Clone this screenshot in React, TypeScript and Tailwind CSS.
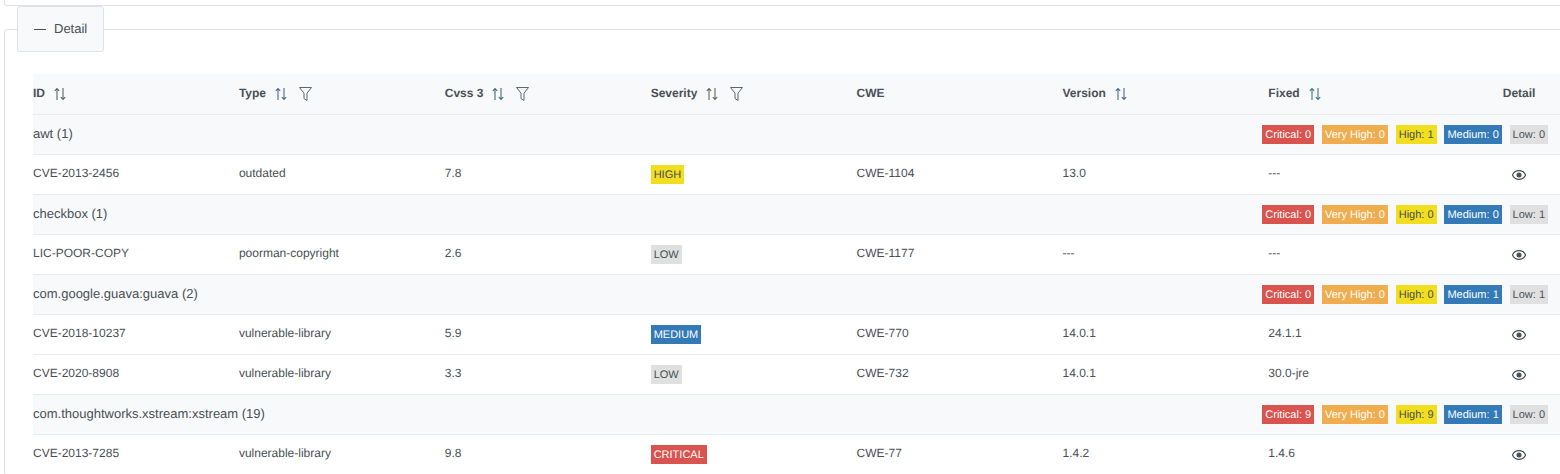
const font = "font-['Liberation_Sans',Arial,sans-serif]";

type Counts = [number, number, number, number, number];

type Row =
  | { group: string; counts: Counts }
  | { id: string; type: string; cvss: string; severity: string; cwe: string; version: string; fixed: string };

const rows: Row[] = [
  { group: "awt (1)", counts: [0, 0, 1, 0, 0] },
  { id: "CVE-2013-2456", type: "outdated", cvss: "7.8", severity: "HIGH", cwe: "CWE-1104", version: "13.0", fixed: "---" },
  { group: "checkbox (1)", counts: [0, 0, 0, 0, 1] },
  { id: "LIC-POOR-COPY", type: "poorman-copyright", cvss: "2.6", severity: "LOW", cwe: "CWE-1177", version: "---", fixed: "---" },
  { group: "com.google.guava:guava (2)", counts: [0, 0, 0, 1, 1] },
  { id: "CVE-2018-10237", type: "vulnerable-library", cvss: "5.9", severity: "MEDIUM", cwe: "CWE-770", version: "14.0.1", fixed: "24.1.1" },
  { id: "CVE-2020-8908", type: "vulnerable-library", cvss: "3.3", severity: "LOW", cwe: "CWE-732", version: "14.0.1", fixed: "30.0-jre" },
  { group: "com.thoughtworks.xstream:xstream (19)", counts: [9, 0, 9, 1, 0] },
  { id: "CVE-2013-7285", type: "vulnerable-library", cvss: "9.8", severity: "CRITICAL", cwe: "CWE-77", version: "1.4.2", fixed: "1.4.6" },
];

const severityClass: Record<string, string> = {
  CRITICAL: "bg-[#d9534f] text-white",
  "VERY HIGH": "bg-[#f0ad4e] text-white",
  HIGH: "bg-[#f1de1f] text-[#495057]",
  MEDIUM: "bg-[#337ab7] text-white",
  LOW: "bg-[#e0e0e0] text-[#495057]",
};

const labels = ["Critical", "Very High", "High", "Medium", "Low"];
const labelKeys = ["CRITICAL", "VERY HIGH", "HIGH", "MEDIUM", "LOW"];

function SortIcon({ color }: { color: string }) {
  return (
    <svg width="12" height="14" viewBox="0 0 12 14" fill="none" stroke={color} strokeWidth="1.1" className="shrink-0">
      <path d="M3 13V1.5M0.8 3.8L3 1.5L5.2 3.8" />
      <path d="M9 1V12.5M6.8 10.2L9 12.5L11.2 10.2" />
    </svg>
  );
}

function FilterIcon() {
  return (
    <svg width="13" height="14" viewBox="0 0 13 14" fill="none" stroke="#5a6670" strokeWidth="1" className="shrink-0">
      <path d="M0.5 0.5H12.5L8 6.2V13.5L5 11.5V6.2Z" />
    </svg>
  );
}

function EyeIcon() {
  return (
    <svg width="14" height="10" viewBox="0 0 14 10" className="inline-block">
      <path d="M7 0.6C4 0.6 1.6 2.3 0.4 5C1.6 7.7 4 9.4 7 9.4S12.4 7.7 13.6 5C12.4 2.3 10 0.6 7 0.6Z" fill="none" stroke="#495057" strokeWidth="1.2" />
      <circle cx="7" cy="5" r="2.5" fill="#495057" />
    </svg>
  );
}

function Badge({ kind, children }: { kind: string; children: React.ReactNode }) {
  return <span className={`flex h-[19px] w-fit items-center px-[3px] pt-[2px] text-[11px] leading-none ${severityClass[kind]}`}>{children}</span>;
}

function Head({ label, sort, filter }: { label: string; sort?: string; filter?: boolean }) {
  return (
    <th className="p-0 text-left align-middle font-bold">
      <div className="flex items-center">
        <span className="relative top-[-1px]">{label}</span>
        {sort && <span className="ml-[9px]"><SortIcon color={sort} /></span>}
        {filter && <span className="ml-3"><FilterIcon /></span>}
      </div>
    </th>
  );
}

export default function App() {
  return (
    <div className={`h-screen w-screen overflow-hidden bg-white text-xs text-[#495057] [text-rendering:geometricPrecision] ${font}`}>
      <div className="ml-1 h-[6px] w-[1600px] rounded-b-[3px] border border-t-0 border-[#dee2e6]" />
      <fieldset className="ml-1 w-[1600px] rounded-[3px] border border-[#dee2e6] pl-7 pr-[39px] pt-[22px]">
        <legend className="ml-[-16px] flex h-[46px] w-[87px] items-center rounded-[3px] border border-[#dee2e6] bg-[#f8f9fa] pl-4 text-[13px]">
          <span className="mr-[8px] h-px w-[12px] bg-[#495057]" />
          Detail
        </legend>
        <table className="w-[1527px] table-fixed border-collapse">
          <colgroup>
            <col className="w-[205.9px]" />
            <col className="w-[205.9px]" />
            <col className="w-[205.9px]" />
            <col className="w-[205.9px]" />
            <col className="w-[205.9px]" />
            <col className="w-[205.9px]" />
            <col className="w-[205.9px]" />
            <col />
          </colgroup>
          <thead>
            <tr className="h-10 border-b border-[#e9ecef] bg-[#f8f9fa]">
              <Head label="ID" sort="#566a62" />
              <Head label="Type" sort="#4a6a90" filter />
              <Head label="Cvss 3" sort="#3f7080" filter />
              <Head label="Severity" sort="#66695a" filter />
              <Head label="CWE" />
              <Head label="Version" sort="#4a6a90" />
              <Head label="Fixed" sort="#3f7a88" />
              <th className="p-0 pl-[4px] text-center align-middle font-bold">
                <span className="relative top-[-1px]">Detail</span>
              </th>
            </tr>
          </thead>
          <tbody>
            {rows.map((row) =>
              "group" in row ? (
                <tr key={row.group} className="h-10 border-b border-[#e9ecef] bg-[#f8f9fa]">
                  <td colSpan={8} className="p-0">
                    <div className="flex items-center justify-between pr-3">
                      <span className="text-[13px]">{row.group}</span>
                      <div className="flex items-center gap-[7.8px]">
                        {row.counts.map((n, i) => (
                          <Badge key={labels[i]} kind={labelKeys[i]}>
                            {labels[i]}: {n}
                          </Badge>
                        ))}
                      </div>
                    </div>
                  </td>
                </tr>
              ) : (
                <tr key={row.id} className="h-10 border-b border-[#e9ecef]">
                  <td className="p-0 pb-[2px]">{row.id}</td>
                  <td className="p-0 pb-[2px]">{row.type}</td>
                  <td className="p-0 pb-[2px]">{row.cvss}</td>
                  <td className="p-0 pt-px">
                    <Badge kind={row.severity}>{row.severity}</Badge>
                  </td>
                  <td className="p-0 pb-[2px]">{row.cwe}</td>
                  <td className="p-0 pb-[2px]">{row.version}</td>
                  <td className="p-0 pb-[2px]">{row.fixed}</td>
                  <td className="p-0 pl-[4px] text-center">
                    <EyeIcon />
                  </td>
                </tr>
              )
            )}
          </tbody>
        </table>
      </fieldset>
    </div>
  );
}
